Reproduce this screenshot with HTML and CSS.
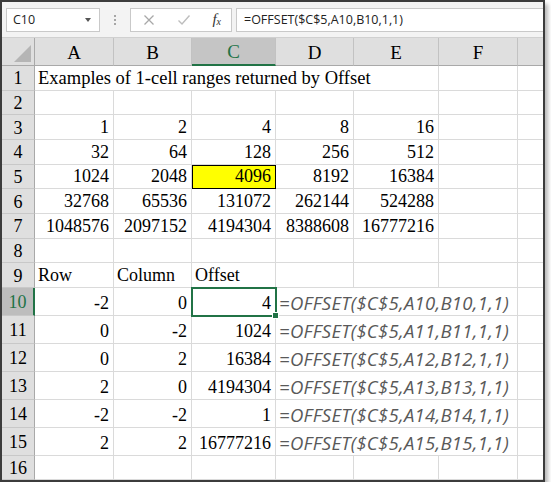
FILE: index.html
```html
<!DOCTYPE html>
<html lang="en">

<head>
    <meta charset="UTF-8">
    <title>OFFSET examples</title>
    <link rel="stylesheet" href="styles.css">
</head>

<body>
    <div class="window">
        <!-- Barra de fórmulas -->
        <div class="formula-bar">
            <div class="name-box">
                <span>C10</span>
                <span class="caret"></span>
            </div>
            <div class="grip"><i></i><i></i><i></i></div>
            <div class="fx-buttons">
                <svg width="12" height="12" viewBox="0 0 12 12">
                    <path d="M1.5 1.5 L10.5 10.5 M10.5 1.5 L1.5 10.5" stroke="#a8a8a8" stroke-width="1.3" fill="none" />
                </svg>
                <svg width="14" height="12" viewBox="0 0 14 12">
                    <path d="M1.5 6.5 L5 10 L12.5 1.5" stroke="#bdbdbd" stroke-width="1.4" fill="none" />
                </svg>
                <span class="fx"><i>f</i><sub>x</sub></span>
            </div>
            <div class="formula-input">=OFFSET($C$5,A10,B10,1,1)</div>
        </div>

        <!-- Planilha -->
        <div class="sheet">
            <div class="corner"><span class="tri"></span></div>
            <div class="col-hdr">A</div>
            <div class="col-hdr">B</div>
            <div class="col-hdr sel">C</div>
            <div class="col-hdr">D</div>
            <div class="col-hdr">E</div>
            <div class="col-hdr">F</div>
            <div class="col-hdr last"></div>

            <div class="row-hdr">1</div>
            <div class="c span5">Examples of 1-cell ranges returned by Offset</div>
            <div class="c"></div>
            <div class="c last"></div>

            <div class="row-hdr">2</div>
            <div class="c"></div><div class="c"></div><div class="c"></div><div class="c"></div><div class="c"></div><div class="c"></div>
            <div class="c last"></div>

            <div class="row-hdr">3</div>
            <div class="c n">1</div><div class="c n">2</div><div class="c n">4</div><div class="c n">8</div><div class="c n">16</div><div class="c"></div>
            <div class="c last"></div>

            <div class="row-hdr">4</div>
            <div class="c n">32</div><div class="c n">64</div><div class="c n">128</div><div class="c n">256</div><div class="c n">512</div><div class="c"></div>
            <div class="c last"></div>

            <div class="row-hdr">5</div>
            <div class="c n">1024</div><div class="c n">2048</div><div class="c n hilite">4096</div><div class="c n">8192</div><div class="c n">16384</div><div class="c"></div>
            <div class="c last"></div>

            <div class="row-hdr">6</div>
            <div class="c n">32768</div><div class="c n">65536</div><div class="c n">131072</div><div class="c n">262144</div><div class="c n">524288</div><div class="c"></div>
            <div class="c last"></div>

            <div class="row-hdr">7</div>
            <div class="c n">1048576</div><div class="c n">2097152</div><div class="c n">4194304</div><div class="c n">8388608</div><div class="c n">16777216</div><div class="c"></div>
            <div class="c last"></div>

            <div class="row-hdr">8</div>
            <div class="c"></div><div class="c"></div><div class="c"></div><div class="c"></div><div class="c"></div><div class="c"></div>
            <div class="c last"></div>

            <div class="row-hdr">9</div>
            <div class="c">Row</div><div class="c">Column</div><div class="c">Offset</div><div class="c"></div><div class="c"></div><div class="c"></div>
            <div class="c last"></div>

            <div class="row-hdr sel">10</div>
            <div class="c n">-2</div><div class="c n">0</div><div class="c n active">4</div>
            <div class="c span3 formula">=OFFSET($C$5,A10,B10,1,1)</div>
            <div class="c last"></div>

            <div class="row-hdr">11</div>
            <div class="c n">0</div><div class="c n">-2</div><div class="c n">1024</div>
            <div class="c span3 formula">=OFFSET($C$5,A11,B11,1,1)</div>
            <div class="c last"></div>

            <div class="row-hdr">12</div>
            <div class="c n">0</div><div class="c n">2</div><div class="c n">16384</div>
            <div class="c span3 formula">=OFFSET($C$5,A12,B12,1,1)</div>
            <div class="c last"></div>

            <div class="row-hdr">13</div>
            <div class="c n">2</div><div class="c n">0</div><div class="c n">4194304</div>
            <div class="c span3 formula">=OFFSET($C$5,A13,B13,1,1)</div>
            <div class="c last"></div>

            <div class="row-hdr">14</div>
            <div class="c n">-2</div><div class="c n">-2</div><div class="c n">1</div>
            <div class="c span3 formula">=OFFSET($C$5,A14,B14,1,1)</div>
            <div class="c last"></div>

            <div class="row-hdr">15</div>
            <div class="c n">2</div><div class="c n">2</div><div class="c n">16777216</div>
            <div class="c span3 formula">=OFFSET($C$5,A15,B15,1,1)</div>
            <div class="c last"></div>

            <div class="row-hdr">16</div>
            <div class="c"></div><div class="c"></div><div class="c"></div><div class="c"></div><div class="c"></div><div class="c"></div>
            <div class="c last"></div>
        </div>
    </div>
</body>

</html>
```

FILE: styles.css
```css
body {
    margin: 0;
    background: #ffffff;
}

.window {
    width: 541px;
    height: 478px;
    border: 2px solid #3c3c3c;
    box-shadow: 3px 4px 4px rgba(0, 0, 0, 0.28);
    background: #f3f3f3;
    overflow: hidden;
}

/* Barra de fórmulas */
.formula-bar {
    height: 36px;
    border-bottom: 1px solid #d0d0d0;
    display: flex;
    align-items: center;
    padding-left: 4px;
    box-sizing: border-box;
    font-family: "Open Sans", "Liberation Sans", sans-serif;
    font-size: 12.5px;
    color: #222;
}

.name-box,
.fx-buttons,
.formula-input {
    height: 24px;
    background: #fff;
    border: 1px solid #c9c9c9;
    box-sizing: border-box;
    display: flex;
    align-items: center;
}

.name-box {
    width: 94px;
    padding: 0 6px 0 6px;
    justify-content: space-between;
}

.caret {
    width: 0;
    height: 0;
    border-left: 3.5px solid transparent;
    border-right: 3.5px solid transparent;
    border-top: 4px solid #555;
    margin-right: 2px;
}

.grip {
    width: 30px;
    display: flex;
    flex-direction: column;
    align-items: center;
    gap: 2px;
}

.grip i {
    width: 2px;
    height: 2px;
    background: #a6a6a6;
}

.fx-buttons {
    width: 102px;
    justify-content: space-between;
    padding: 0 10px 0 12px;
}

.fx {
    font-family: "Liberation Serif", serif;
    font-size: 15px;
    color: #333;
}

.fx i {
    font-style: italic;
}

.fx sub {
    font-style: italic;
    font-size: 10px;
    vertical-align: -1px;
}

.formula-input {
    flex: 1;
    margin-left: 4px;
    padding-left: 7px;
    border-right: none;
}

/* Planilha */
.sheet {
    display: grid;
    grid-template-columns: 33px 79px 78px 84px 78px 85px 79px 1fr;
    grid-template-rows: 28px repeat(9, 24.67px) repeat(6, 28px) 24px;
    background: #fff;
    font-family: "Liberation Serif", "Times New Roman", serif;
    font-size: 18px;
    color: #000;
}

.corner,
.col-hdr,
.row-hdr {
    background: #dfdfdf;
    box-sizing: border-box;
    display: flex;
    align-items: center;
    justify-content: center;
}

.corner {
    border-right: 1px solid #a9a9a9;
    border-bottom: 1px solid #a9a9a9;
    align-items: flex-end;
    justify-content: flex-end;
    padding: 0 3px 3px 0;
}

.tri {
    width: 0;
    height: 0;
    border-left: 17px solid transparent;
    border-bottom: 17px solid #b5b5b5;
}

.col-hdr {
    border-right: 1px solid #c2c2c2;
    border-bottom: 1px solid #a9a9a9;
    padding-top: 2px;
    font-size: 19px;
}

.col-hdr.last {
    border-right: none;
}

.col-hdr.sel {
    background: #c5c5c5;
    color: #217346;
    border-bottom: 2px solid #217346;
}

.row-hdr {
    border-right: 1px solid #a9a9a9;
    border-bottom: 1px solid #c8c8c8;
    padding-top: 2px;
}

.row-hdr.sel {
    background: #bdbdbd;
    color: #217346;
    border-right: 2px solid #217346;
}

.c {
    box-sizing: border-box;
    border-right: 1px solid #dadada;
    border-bottom: 1px solid #dadada;
    display: flex;
    align-items: flex-end;
    padding: 0 4px 1px 3px;
    white-space: nowrap;
}

.c.last {
    border-right: none;
}

.n {
    justify-content: flex-end;
}

.span5 {
    grid-column: span 5;
    font-size: 18.5px;
}

.span3 {
    grid-column: span 3;
}

.hilite {
    background: #ffff00;
    outline: 1.5px solid #000;
    outline-offset: -1px;
}

.active {
    position: relative;
    outline: 2px solid #217346;
    outline-offset: -1px;
}

.active::after {
    content: "";
    position: absolute;
    right: -4px;
    bottom: -4px;
    width: 5px;
    height: 5px;
    background: #217346;
    border: 1px solid #fff;
}

.formula {
    font-family: "Open Sans", "Liberation Sans", sans-serif;
    font-style: italic;
    font-size: 18.5px;
    letter-spacing: 0.3px;
    color: #595959;
    padding-left: 3px;
    padding-bottom: 0;
}
```
